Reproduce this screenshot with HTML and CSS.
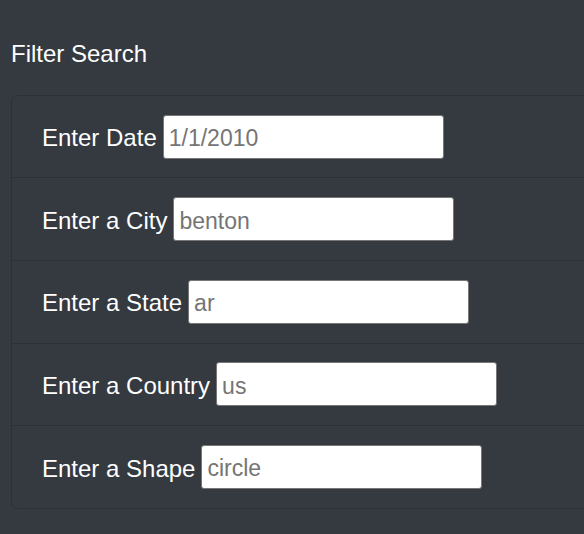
FILE: index.html
```html
<!DOCTYPE html>
<html lang="en">
<head>
<meta charset="utf-8">
<title>Filter Search</title>
<link rel="stylesheet" href="styles.css">
</head>
<body>
<div class="page">
  <h2 class="title">Filter Search</h2>
  <form class="filters">
    <ul class="list">
      <li class="item">
        <label class="label" for="datetime">Enter Date</label>
        <input class="field" type="text" id="datetime" placeholder="1/1/2010">
      </li>
      <li class="item">
        <label class="label" for="city">Enter a City</label>
        <input class="field" type="text" id="city" placeholder="benton">
      </li>
      <li class="item">
        <label class="label" for="state">Enter a State</label>
        <input class="field" type="text" id="state" placeholder="ar">
      </li>
      <li class="item">
        <label class="label" for="country">Enter a Country</label>
        <input class="field" type="text" id="country" placeholder="us">
      </li>
      <li class="item">
        <label class="label" for="shape">Enter a Shape</label>
        <input class="field" type="text" id="shape" placeholder="circle">
      </li>
    </ul>
  </form>
</div>
</body>
</html>
```
FILE: styles.css
```css
html, body {
  margin: 0;
  padding: 0;
  background: #343a40;
  overflow: hidden;
}

body {
  font-family: "Liberation Sans", Arial, Helvetica, sans-serif;
  color: #ffffff;
}

.page {
  padding: 40px 0 0 11px;
}

.title {
  margin: 0 0 26px 0;
  font-size: 24px;
  font-weight: 400;
  line-height: 1.2;
}

.filters {
  margin: 0;
}

.list {
  list-style: none;
  margin: 0;
  padding: 0;
  width: 600px;
  border: 1px solid rgba(0, 0, 0, 0.14);
  border-radius: 6px;
}

.item {
  display: flex;
  align-items: center;
  gap: 6px;
  padding: 18.8px 30px;
  border-top: 1px solid rgba(0, 0, 0, 0.14);
}

.item:first-child {
  border-top: none;
}

.label {
  padding-top: 4px;
  font-size: 24px;
  line-height: 1.2;
  color: #ffffff;
  white-space: nowrap;
}

.field {
  box-sizing: border-box;
  width: 281px;
  height: 44px;
  margin: 0;
  padding: 4px 5px 0;
  border: 1px solid #767676;
  border-radius: 3px;
  background: #ffffff;
  font-family: "Liberation Sans", Arial, Helvetica, sans-serif;
  font-size: 23px;
  color: #333333;
  outline: none;
}

.field::placeholder {
  color: #757575;
  opacity: 1;
}
```
